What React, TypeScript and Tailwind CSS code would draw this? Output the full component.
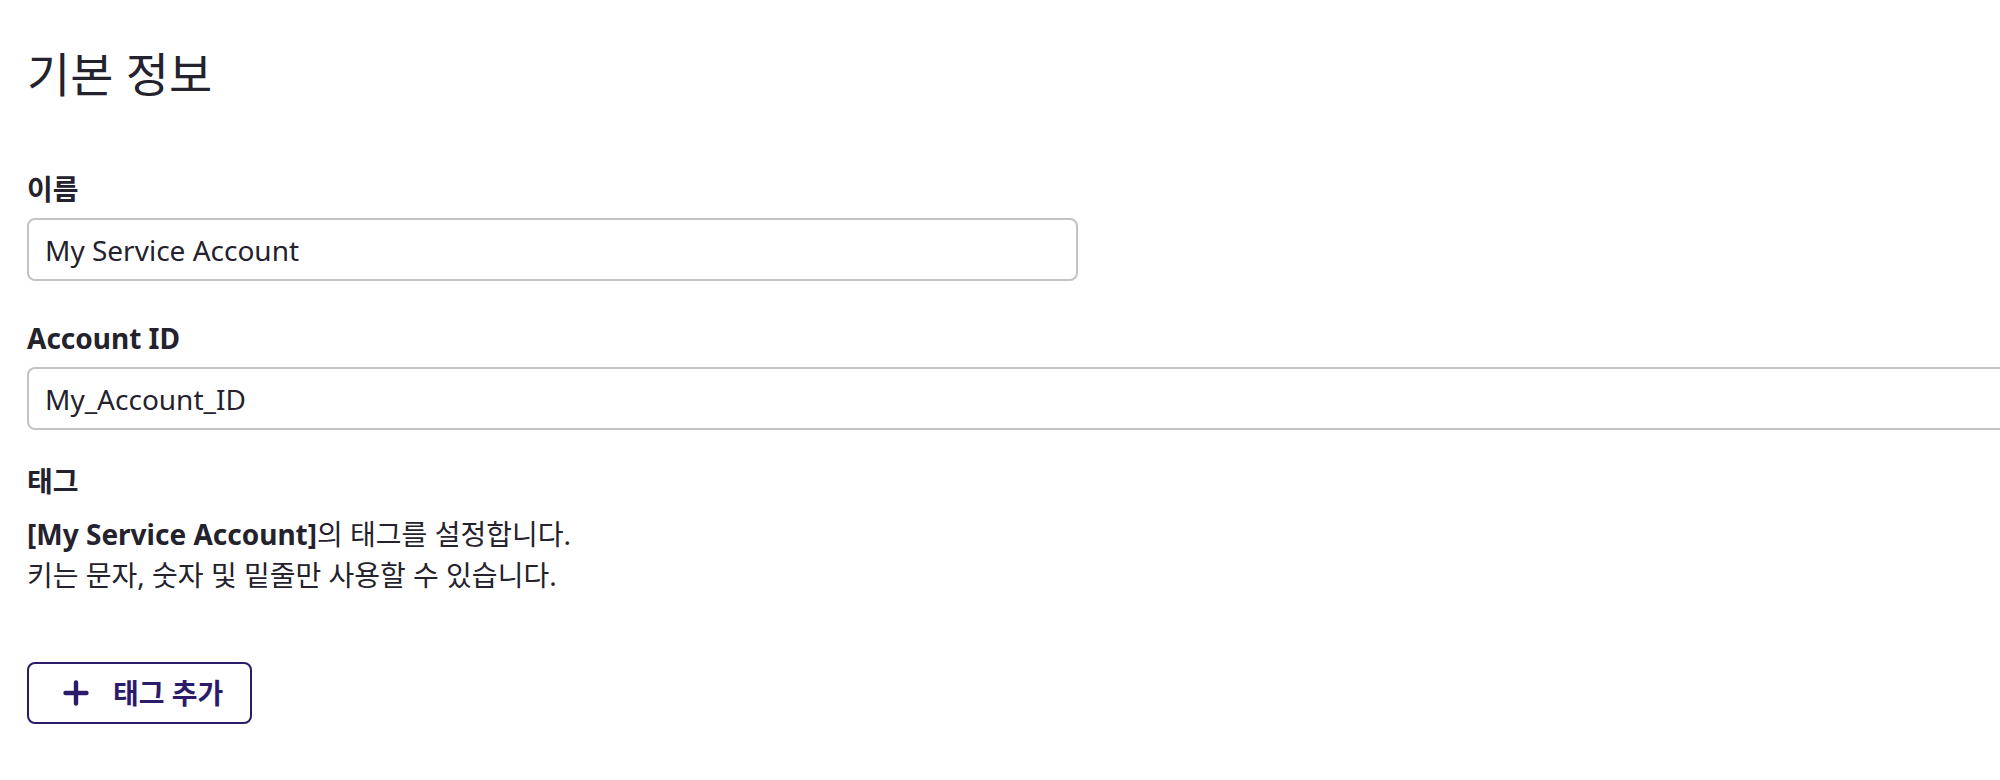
import { useState } from 'react'

const FONT = '"Noto Sans", "Noto Sans CJK KR", sans-serif'

function PlusIcon() {
  return (
    <svg width="26" height="26" viewBox="0 0 26 26" fill="none" className="shrink-0">
      <path d="M13 2.5v21M2.5 13h21" stroke="currentColor" strokeWidth="4.4" strokeLinecap="round" />
    </svg>
  )
}

function Field({ label, value, onChange, wide }: { label: string; value: string; onChange: (v: string) => void; wide?: boolean }) {
  return (
    <div className="flex flex-col">
      <label className="text-[28px] leading-[38px] font-bold text-[#23222d] mb-[10px]">{label}</label>
      <input
        value={value}
        onChange={(e) => onChange(e.target.value)}
        className={`h-[63px] ${wide ? 'w-[2100px]' : 'w-[1051px]'} rounded-[8px] border-2 border-[#c2c2c7] bg-white px-[16px] text-[28px] text-[#23222d] outline-none`}
        style={{ fontFamily: FONT }}
      />
    </div>
  )
}

export default function App() {
  const [name, setName] = useState('My Service Account')
  const [accountId, setAccountId] = useState('My_Account_ID')

  return (
    <div className="w-[2000px] h-[780px] overflow-hidden bg-white pl-[27px] pt-[47px] text-[#23222d]" style={{ fontFamily: FONT }}>
      <h1 className="text-[47px] leading-[54px] font-normal">기본 정보</h1>

      <div className="mt-[69px] flex flex-col gap-[38px]">
        <Field label="이름" value={name} onChange={setName} />
        <Field label="Account ID" value={accountId} onChange={setAccountId} wide />
      </div>

      <div className="mt-[32px]">
        <div className="text-[28px] leading-[38px] font-bold">태그</div>
        <p className="mt-[14px] text-[28px] leading-[41px]">
          <span className="font-bold">[{name}]</span>의 태그를 설정합니다.
          <br />
          키는 문자, 숫자 및 밑줄만 사용할 수 있습니다.
        </p>
      </div>

      <button className="mt-[66px] h-[62px] w-[225px] flex items-center rounded-[8px] border-2 border-[#2c1a6b] bg-white pl-[34px] text-[#2c1a6b]">
        <PlusIcon />
        <span className="ml-[24px] text-[28px] font-bold leading-none">태그 추가</span>
      </button>
    </div>
  )
}
